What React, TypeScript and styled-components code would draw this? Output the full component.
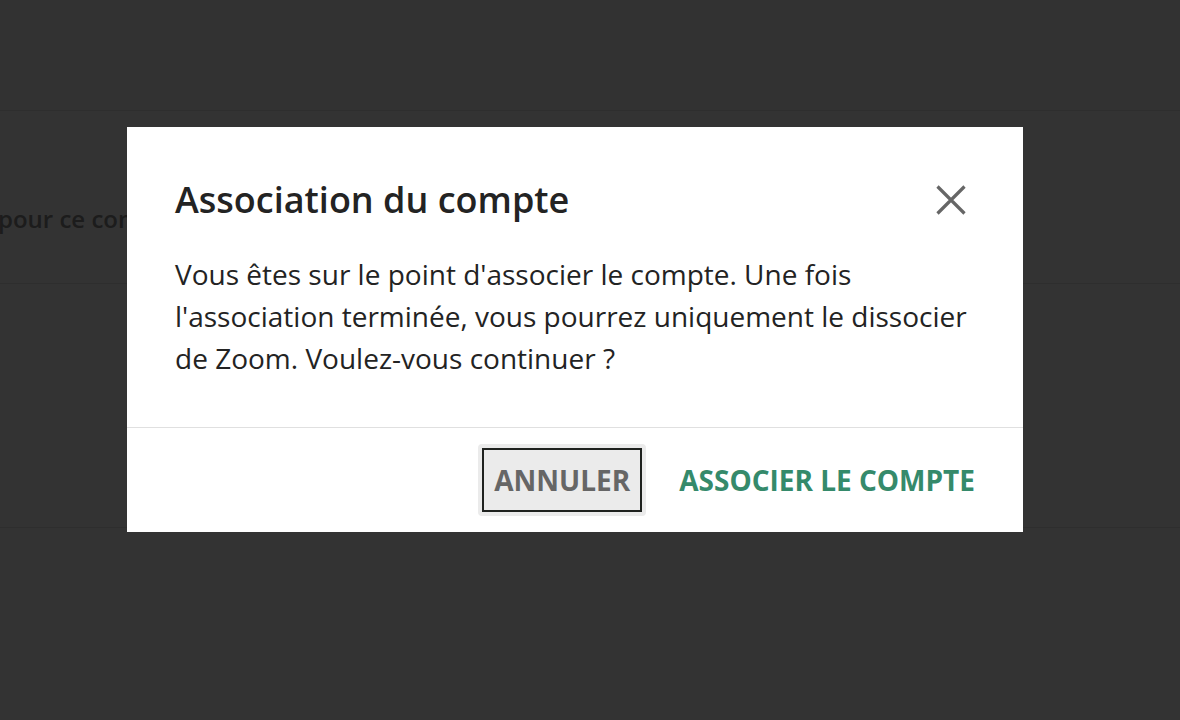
import React from "react";
import styled, { createGlobalStyle } from "styled-components";

const GlobalStyle = createGlobalStyle`
  html, body {
    margin: 0;
    padding: 0;
    width: 100%;
    height: 100%;
    overflow: hidden;
    background: #ffffff;
    font-family: "Open Sans", "Noto Sans", "Liberation Sans", sans-serif;
  }
  #root { height: 100%; }
  * { box-sizing: border-box; }
`;

const Page = styled.div`
  position: relative;
  width: 100%;
  height: 720px;
  background: #ffffff;
  display: flex;
  flex-direction: column;
  overflow: hidden;
`;

const PageHeader = styled.header`
  height: 111px;
  flex: none;
  background: #f8f8f8;
  border-bottom: 1px solid #e6e6e6;
`;

const PageRow = styled.section<{ $h: number }>`
  height: ${(p) => p.$h}px;
  flex: none;
  border-bottom: 1px solid #e6e6e6;
  display: flex;
  align-items: flex-start;
  padding-top: 91px;
`;

const RowText = styled.span`
  margin-left: -2px;
  font-size: 24px;
  line-height: 34px;
  font-weight: 600;
  color: #8a8a8a;
  white-space: nowrap;
`;

const Overlay = styled.div`
  position: absolute;
  inset: 0;
  background: rgba(0, 0, 0, 0.8);
  display: flex;
  align-items: flex-start;
  justify-content: flex-start;
  padding: 127px 0 0 127px;
`;

const Dialog = styled.div`
  width: 896px;
  background: #ffffff;
  display: flex;
  flex-direction: column;
`;

const DialogHeader = styled.div`
  display: flex;
  align-items: center;
  justify-content: space-between;
  padding: 48px 48px 0 48px;
`;

const Title = styled.h2`
  margin: 0;
  font-size: 36px;
  line-height: 50px;
  font-weight: 600;
  color: #232323;
`;

const CloseButton = styled.button`
  width: 44px;
  height: 44px;
  margin-right: 2px;
  border: none;
  background: transparent;
  padding: 0;
  display: flex;
  align-items: center;
  justify-content: center;
  cursor: pointer;
  color: #666666;
`;

const Body = styled.p`
  margin: 0;
  padding: 28px 48px 48px 48px;
  font-size: 28px;
  line-height: 42px;
  font-weight: 400;
  color: #232323;
  border-bottom: 1px solid #e0e0e0;
`;

const Footer = styled.div`
  display: flex;
  justify-content: flex-end;
  align-items: center;
  gap: 17px;
  padding: 16px 32px 16px 48px;
`;

const ActionButton = styled.button<{ $variant: "secondary" | "primary" }>`
  height: 72px;
  padding: 0 16px;
  border: none;
  border-radius: 4px;
  font-family: inherit;
  font-size: 28px;
  font-weight: 700;
  text-transform: uppercase;
  letter-spacing: 0;
  cursor: pointer;
  background: ${(p) => (p.$variant === "secondary" ? "#ebebeb" : "transparent")};
  color: ${(p) => (p.$variant === "secondary" ? "#666666" : "#358a6b")};
  outline: ${(p) => (p.$variant === "secondary" ? "2px solid #1f221f" : "none")};
  outline-offset: -6px;
`;

export default function App() {
  return (
    <>
      <GlobalStyle />
      <Page>
        <PageHeader />
        <PageRow $h={173}>
          <RowText>pour ce compte</RowText>
        </PageRow>
        <PageRow $h={244} />
        <Overlay>
          <Dialog role="dialog" aria-modal="true">
            <DialogHeader>
              <Title>Association du compte</Title>
              <CloseButton aria-label="Fermer">
                <svg width="30" height="30" viewBox="0 0 30 30" fill="none">
                  <path
                    d="M1.5 1.5 L28.5 28.5 M28.5 1.5 L1.5 28.5"
                    stroke="currentColor"
                    strokeWidth="3.2"
                  />
                </svg>
              </CloseButton>
            </DialogHeader>
            <Body>
              Vous êtes sur le point d'associer le compte. Une fois
              <br />
              l'association terminée, vous pourrez uniquement le dissocier de
              Zoom. Voulez-vous continuer ?
            </Body>
            <Footer>
              <ActionButton $variant="secondary">Annuler</ActionButton>
              <ActionButton $variant="primary">Associer le compte</ActionButton>
            </Footer>
          </Dialog>
        </Overlay>
      </Page>
    </>
  );
}
